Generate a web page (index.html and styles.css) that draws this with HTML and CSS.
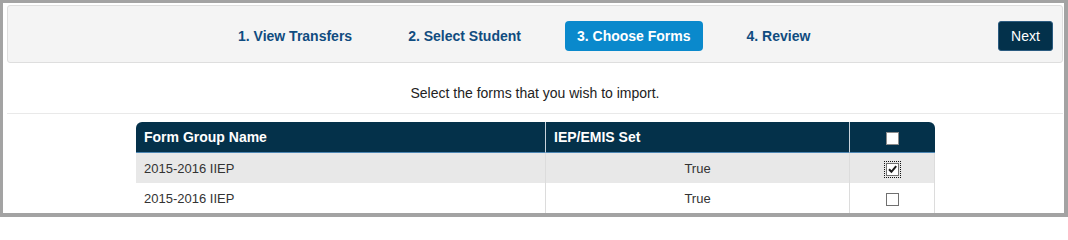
FILE: index.html
```html
<!DOCTYPE html>
<html lang="en">
<head>
<meta charset="utf-8">
<title>Import Forms</title>
<link rel="stylesheet" href="styles.css">
</head>
<body>
<div class="frame">
  <div class="wizard">
    <nav class="steps">
      <span class="step">1. View Transfers</span>
      <span class="step">2. Select Student</span>
      <span class="step active">3. Choose Forms</span>
      <span class="step">4. Review</span>
    </nav>
    <button class="next" type="button">Next</button>
  </div>
  <div class="intro">Select the forms that you wish to import.</div>
  <table class="forms">
    <thead>
      <tr>
        <th class="c-name">Form Group Name</th>
        <th class="c-set">IEP/EMIS Set</th>
        <th class="c-check"><span class="cb cb-head"></span></th>
      </tr>
    </thead>
    <tbody>
      <tr class="alt">
        <td class="c-name">2015-2016 IIEP</td>
        <td class="c-set center">True</td>
        <td class="c-check center"><span class="cb checked focus"><svg viewBox="0 0 11 11" width="11" height="11"><path d="M2 5.3 L4.4 7.8 L9.2 2.2" fill="none" stroke="#1a1a1a" stroke-width="2"/></svg></span></td>
      </tr>
      <tr>
        <td class="c-name">2015-2016 IIEP</td>
        <td class="c-set center">True</td>
        <td class="c-check center"><span class="cb"></span></td>
      </tr>
    </tbody>
  </table>
</div>
</body>
</html>
```
FILE: styles.css
```css
html, body {
  margin: 0;
  padding: 0;
  background: #ffffff;
}

body {
  font-family: "Liberation Sans", Arial, sans-serif;
}

.frame {
  box-sizing: border-box;
  width: 1068px;
  height: 217px;
  border: 3px solid #a3a3a3;
  border-right-width: 4px;
  border-bottom-width: 4px;
  background: #ffffff;
  overflow: hidden;
}

.wizard {
  box-sizing: border-box;
  height: 58px;
  margin: 2px 1px 0 4px;
  padding: 15px 9px 0 218px;
  display: flex;
  align-items: flex-start;
  background: #f4f4f4;
  border: 1px solid #dedede;
  border-radius: 3px;
}

.steps {
  display: flex;
  gap: 32px;
}

.step {
  display: block;
  height: 30px;
  line-height: 30px;
  padding: 0 12px;
  font-size: 14px;
  font-weight: bold;
  color: #104c80;
  border-radius: 4px;
  white-space: nowrap;
}

.step.active {
  background: #0a89cc;
  color: #ffffff;
}

.next {
  margin-left: auto;
  box-sizing: border-box;
  width: 55px;
  height: 30px;
  padding: 0;
  font-family: "Liberation Sans", Arial, sans-serif;
  font-size: 14px;
  color: #ffffff;
  background: #03314b;
  border: 1px solid #2b5b80;
  border-radius: 3px;
}

.intro {
  box-sizing: border-box;
  height: 51px;
  margin: 0 1px 0 4px;
  padding-top: 22px;
  line-height: 16px;
  font-size: 14px;
  color: #222222;
  text-align: center;
  border-bottom: 1px solid #e9e9e9;
}

.forms {
  width: 799px;
  margin: 8px 0 0 133px;
  border-collapse: separate;
  border-spacing: 0;
  table-layout: fixed;
}

.forms th,
.forms td {
  box-sizing: border-box;
  padding: 0 8px;
  height: 30px;
  white-space: nowrap;
}

.forms th {
  background: #04314a;
  color: #ffffff;
  font-size: 14px;
  font-weight: bold;
  text-align: left;
  height: 31px;
  border-bottom: 1px solid #4d86b3;
}

.forms th.c-name {
  width: 409px;
  border-top-left-radius: 6px;
}

.forms th.c-set {
  width: 304px;
  border-left: 1px solid #c9d3dc;
}

.forms th.c-check {
  width: 86px;
  border-left: 1px solid #c9d3dc;
  border-top-right-radius: 6px;
  text-align: center;
}

.forms td {
  font-size: 13px;
  color: #333333;
}

.forms td.c-set,
.forms td.c-check {
  border-left: 1px solid #dcdcdc;
}

.forms td.c-check {
  border-right: 1px solid #dcdcdc;
}

.forms tr.alt td {
  background: #e8e8e8;
}

.center {
  text-align: center;
}

.cb {
  display: inline-block;
  box-sizing: border-box;
  width: 13px;
  height: 13px;
  border: 1px solid #707070;
  background: #ffffff;
  vertical-align: middle;
  position: relative;
}

.cb-head {
  border-color: #8a8a8a;
}

.cb svg {
  display: block;
  position: absolute;
  left: 0;
  top: 0;
}

.cb.focus {
  outline: 1px dotted #111111;
  outline-offset: 1px;
}
```
